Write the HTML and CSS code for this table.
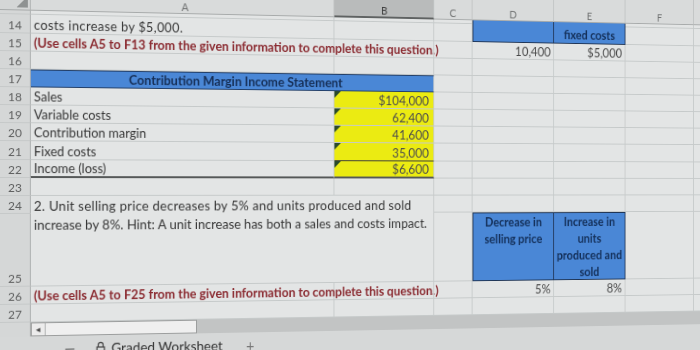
FILE: index.html
```html
<!DOCTYPE html>
<html>
<head>
<meta charset="utf-8">
<link rel="stylesheet" href="styles.css">
</head>
<body>
<div class="screen">
  <div class="sheet">
    <!-- column headers -->
    <div class="corner"></div>
    <div class="ch">A</div>
    <div class="ch sel">B</div>
    <div class="ch">C</div>
    <div class="ch">D</div>
    <div class="ch">E</div>
    <div class="ch">F</div>
    <div class="ch"></div>

    <!-- row 13 (cut) -->
    <div class="rn"></div>
    <div class="c"></div>
    <div class="c"></div>
    <div class="c"></div>
    <div class="c blue tall first"></div>
    <div class="c blue tall"><span>fixed costs</span></div>
    <div class="c"></div>
    <div class="c"></div>

    <!-- row 14 -->
    <div class="rn">14</div>
    <div class="c wide">costs increase by $5,000.</div>
    <div class="c"></div>
    <div class="c"></div>
    <div class="c"></div>
    <div class="c"></div>

    <!-- row 15 -->
    <div class="rn">15</div>
    <div class="c red">(Use cells A5 to F13 from the given information to complete this question.)</div>
    <div class="c"></div>
    <div class="c"></div>
    <div class="c num">10,400</div>
    <div class="c num">$5,000</div>
    <div class="c"></div>
    <div class="c"></div>

    <!-- row 16 -->
    <div class="rn">16</div>
    <div class="c"></div>
    <div class="c"></div>
    <div class="c"></div>
    <div class="c"></div>
    <div class="c"></div>
    <div class="c"></div>
    <div class="c"></div>

    <!-- row 17 -->
    <div class="rn">17</div>
    <div class="c title">Contribution Margin Income Statement</div>
    <div class="c"></div>
    <div class="c"></div>
    <div class="c"></div>
    <div class="c"></div>
    <div class="c"></div>

    <!-- row 18 -->
    <div class="rn">18</div>
    <div class="c">Sales</div>
    <div class="c yel">$104,000</div>
    <div class="c"></div>
    <div class="c"></div>
    <div class="c"></div>
    <div class="c"></div>
    <div class="c"></div>

    <!-- row 19 -->
    <div class="rn">19</div>
    <div class="c">Variable costs</div>
    <div class="c yel">62,400</div>
    <div class="c"></div>
    <div class="c"></div>
    <div class="c"></div>
    <div class="c"></div>
    <div class="c"></div>

    <!-- row 20 -->
    <div class="rn">20</div>
    <div class="c">Contribution margin</div>
    <div class="c yel">41,600</div>
    <div class="c"></div>
    <div class="c"></div>
    <div class="c"></div>
    <div class="c"></div>
    <div class="c"></div>

    <!-- row 21 -->
    <div class="rn">21</div>
    <div class="c">Fixed costs</div>
    <div class="c yel under">35,000</div>
    <div class="c"></div>
    <div class="c"></div>
    <div class="c"></div>
    <div class="c"></div>
    <div class="c"></div>

    <!-- row 22 -->
    <div class="rn">22</div>
    <div class="c thick">Income (loss)</div>
    <div class="c yel thick">$6,600</div>
    <div class="c"></div>
    <div class="c"></div>
    <div class="c"></div>
    <div class="c"></div>
    <div class="c"></div>

    <!-- row 23 -->
    <div class="rn">23</div>
    <div class="c"></div>
    <div class="c"></div>
    <div class="c"></div>
    <div class="c"></div>
    <div class="c"></div>
    <div class="c"></div>
    <div class="c"></div>

    <!-- row 24 -->
    <div class="rn">24</div>
    <div class="c wrap"><span class="line1">2. Unit selling price decreases by 5% and units produced and sold</span><br>increase by 8%. Hint: A unit increase has both a sales and costs impact.</div>
    <div class="c"></div>
    <div class="c"></div>
    <div class="c"></div>
    <div class="c"></div>
    <div class="c"></div>

    <!-- row 25 -->
    <div class="rn">25</div>
    <div class="c"></div>
    <div class="c blue box first">Decrease in<br>selling price</div>
    <div class="c blue box">Increase in<br>units<br>produced and<br>sold</div>
    <div class="c"></div>
    <div class="c"></div>

    <!-- row 26 -->
    <div class="rn">26</div>
    <div class="c red">(Use cells A5 to F25 from the given information to complete this question.)</div>
    <div class="c"></div>
    <div class="c"></div>
    <div class="c num">5%</div>
    <div class="c num">8%</div>
    <div class="c"></div>
    <div class="c"></div>

    <!-- row 27 -->
    <div class="rn">27</div>
    <div class="c"></div>
    <div class="c"></div>
    <div class="c"></div>
    <div class="c"></div>
    <div class="c"></div>
    <div class="c"></div>
    <div class="c"></div>
  </div>

  <div class="hbar">
    <div class="hbar-gap"></div>
    <div class="scroll">
      <div class="arrow">&#9666;</div>
      <div class="thumb"></div>
    </div>
    <div class="band"></div>
  </div>

  <div class="tabs">
    <span class="dash">&#8212;</span>
    <svg class="lock" width="10" height="12" viewBox="0 0 10 12"><path d="M2.5 6 V3.8 A2.5 2.5 0 0 1 7.5 3.8 V6" fill="none" stroke="#444" stroke-width="1.2"/><rect x="1.2" y="6" width="7.6" height="5.5" fill="none" stroke="#444" stroke-width="1.2"/></svg>
    <span class="tabname">Graded Worksheet</span>
    <span class="plus">+</span>
  </div>
</div>
</body>
</html>
```

FILE: styles.css
```css
* { box-sizing: border-box; }
html, body { margin: 0; padding: 0; }
body {
  width: 700px;
  height: 350px;
  overflow: hidden;
  background: #d8dada;
  font-family: Lato, "Liberation Sans", sans-serif;
}
.screen {
  width: 800px;
  margin-top: -20px;
  background: #e3e5e5;
  transform: perspective(300px) rotateY(2.111deg);
  transform-origin: 0 208px;
}
.sheet {
  display: grid;
  grid-template-columns: 31px 318px 110px 43px 93px 83px 81px 41px;
  grid-template-rows: 30px 4px 19px 18px 18px 18px 18px 18px 18px 19px 18px 18px 18px 73px 18px 18px;
}
.corner {
  background-color: #d4d6d6;
  background-image: linear-gradient(to bottom right, transparent 50%, #8f9292 50%);
  background-size: 11px 11px;
  background-repeat: no-repeat;
  background-position: right 2px bottom 2px;
  border-right: 1px solid #b2b5b5;
  border-bottom: 1px solid #a8abab;
}
.ch {
  display: flex;
  align-items: flex-end;
  justify-content: center;
  background: #d9dbdb;
  border-right: 1px solid #c0c3c3;
  border-bottom: 1px solid #a8abab;
  font-size: 11px;
  line-height: 13px;
  color: #707272;
}
.ch.sel {
  background: #b9bbbb;
  border-bottom: 2px solid #5f6262;
  color: #3c3c3c;
}
.rn {
  display: flex;
  align-items: flex-end;
  justify-content: center;
  background: #d5d7d7;
  border-right: 1px solid #adb0b0;
  border-bottom: 1px solid #c6c9c9;
  font-size: 12px;
  line-height: 15px;
  color: #5e5f5f;
}
.c {
  display: flex;
  align-items: flex-end;
  padding: 0 3px;
  border-right: 1px solid #c6caca;
  border-bottom: 1px solid #c6caca;
  font-size: 13px;
  line-height: 16px;
  color: #363636;
  white-space: nowrap;
}
.wide { letter-spacing: 0.4px; }
.num {
  justify-content: flex-end;
  color: #4a4a4a;
}
.red {
  color: #8a2a30;
  font-weight: 700;
}
.title {
  grid-column: span 2;
  align-items: center;
  justify-content: center;
  background: #4a87d6;
  border-top: 1px solid #23406a;
  border-bottom: 1px solid #23406a;
  color: #162f57;
  font-weight: 700;
}
.yel {
  position: relative;
  justify-content: flex-end;
  background: #ebeb12;
  color: #4d4d4d;
  padding-right: 5px;
}
.yel::before {
  content: "";
  position: absolute;
  top: 0;
  left: 0;
  border-top: 7px solid #2b4a2a;
  border-right: 7px solid transparent;
}
.under { border-bottom: 1px solid #3a3a3a; }
.thick { border-bottom: 2px solid #555858; }
.wrap {
  grid-column: span 2;
  grid-row: span 2;
  align-items: flex-start;
  flex-direction: column;
  padding-top: 1px;
  font-size: 13.5px;
  line-height: 19px;
}
.wrap br { display: none; }
.line1 { letter-spacing: 0.23px; }
.blue {
  background: #4a87d6;
  border-right: 1px solid #1f3556;
  border-bottom: 1px solid #1f3556;
  color: #14305a;
  font-size: 12.5px;
  font-weight: 700;
  justify-content: center;
  text-align: center;
}
.blue.first { border-left: 1px solid #1f3556; }
.blue.tall {
  grid-row: span 2;
  overflow: hidden;
}
.blue.box {
  border-top: 1px solid #1f3556;
  align-items: flex-start;
  padding: 1px 0 0;
  line-height: 18px;
}
.hbar {
  display: flex;
  height: 14px;
}
.hbar-gap {
  width: 31px;
  background: #d5d7d7;
  border-right: 1px solid #adb0b0;
}
.scroll {
  display: flex;
  width: 171px;
  background: #ececec;
  border: 1px solid #9c9e9e;
}
.arrow {
  width: 14px;
  border-right: 1px solid #b0b2b2;
  font-size: 9px;
  line-height: 12px;
  text-align: center;
  color: #444;
}
.thumb {
  flex: 1;
  background: #efefef;
}
.band {
  flex: 1;
  background: #c2c4c4;
}
.tabs {
  display: flex;
  align-items: flex-start;
  height: 40px;
  padding: 4px 0 0 65px;
  background: #d6d8d8;
  color: #333;
  font-size: 14px;
  line-height: 18px;
}
.dash { width: 32px; color: #444; }
.lock { margin-top: 2px; margin-right: 6px; }
.tabname { width: 141px; }
.plus { color: #777; font-size: 15px; }
```
